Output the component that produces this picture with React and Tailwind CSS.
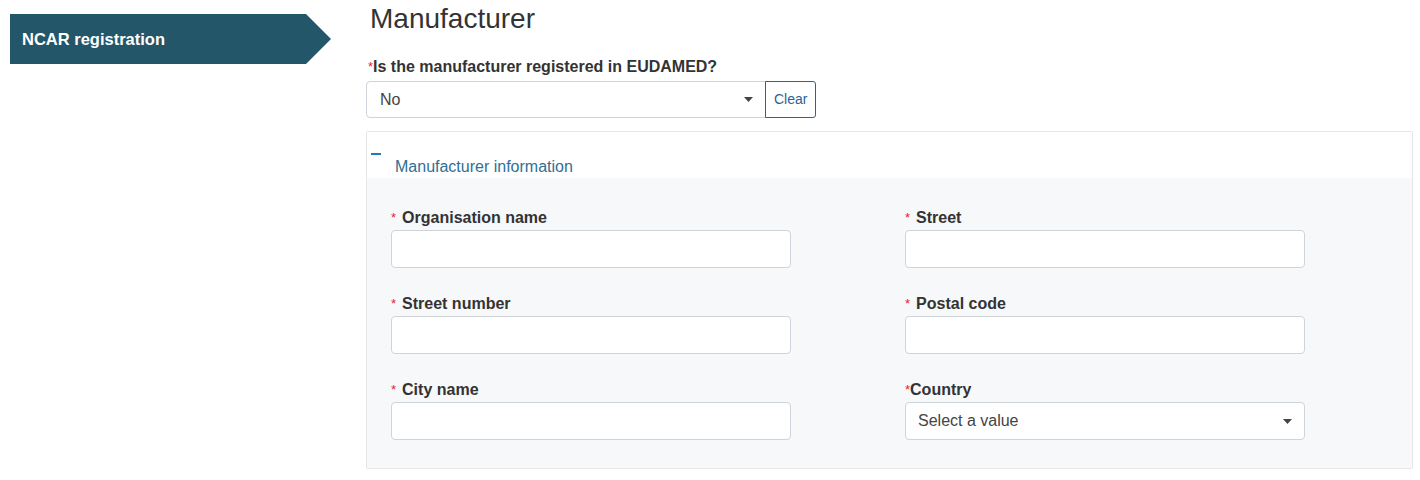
import React from 'react';

const font = { fontFamily: '"Liberation Sans", Arial, sans-serif' };

function Caret() {
  return (
    <svg width="9" height="5" viewBox="0 0 9 5" className="shrink-0">
      <path d="M0 0h9L4.5 5z" fill="#444" />
    </svg>
  );
}

function Field({ label, tight, select }) {
  return (
    <div className="flex flex-col">
      <label className="h-[22px] flex items-center text-[16px] font-bold text-[#333]">
        <span className={`text-[#e4222e] font-normal text-[13px] ${tight ? '' : 'mr-[6px]'}`}>*</span>
        {label}
      </label>
      {select ? (
        <div className="mt-[1px] w-[400px] h-[38px] bg-white border border-[#ced4da] rounded-[4px] flex items-center justify-between pl-[12px] pr-[12px] text-[16px] text-[#444]">
          <span>Select a value</span>
          <Caret />
        </div>
      ) : (
        <div className="mt-[1px] w-[400px] h-[38px] bg-white border border-[#ced4da] rounded-[4px]" />
      )}
    </div>
  );
}

export default function App() {
  return (
    <div className="w-[1420px] h-[480px] bg-white flex" style={font}>
      {/* Side nav */}
      <div className="w-[356px] shrink-0 pl-[10px] pt-[14px]">
        <div className="flex h-[50px]">
          <div className="w-[295px] bg-[#235668] flex items-center pl-[12px] text-white font-bold text-[16.5px]">
            NCAR registration
          </div>
          <svg width="26" height="50" viewBox="0 0 26 50" className="block">
            <path d="M0 0h1l25 25L1 50H0z" fill="#235668" />
          </svg>
        </div>
      </div>

      {/* Main */}
      <div className="flex-1 pl-[10px] pr-[7px]">
        <h1 className="text-[28px] text-[#333] leading-[34px] mt-[2px] pl-[4px]">Manufacturer</h1>

        <div className="mt-[21px] pl-[2px] text-[16px] font-bold text-[#333] leading-[20px]">
          <span className="text-[#e4222e] font-normal text-[13px] align-top">*</span>
          Is the manufacturer registered in EUDAMED?
        </div>
        <div className="flex mt-[4px]">
          <div className="w-[400px] h-[37px] border border-[#ced4da] rounded-l-[4px] flex items-center justify-between pl-[13px] pr-[12px] text-[16px] text-[#444]">
            <span>No</span>
            <Caret />
          </div>
          <div className="h-[37px] px-[8px] border border-[#2a6496] rounded-r-[3px] -ml-px flex items-center text-[14px] text-[#2a6496]">
            Clear
          </div>
        </div>

        <div className="mt-[13px] border border-[#e6e6e6] rounded-[2px]">
          <div className="h-[46px] bg-white relative">
            <div className="absolute left-[4px] top-[21px] w-[10px] h-[2px] bg-[#2779b0]" />
            <div className="pl-[28px] pt-[26px] text-[16px] text-[#2f6f94] leading-[18px]">Manufacturer information</div>
          </div>
          <div className="bg-[#f7f8fa] pl-[24px] pt-[29px] pb-[28px] grid grid-cols-[514px_400px] gap-y-[25px]">
            <Field label="Organisation name" />
            <Field label="Street" />
            <Field label="Street number" />
            <Field label="Postal code" />
            <Field label="City name" />
            <Field label="Country" tight select />
          </div>
        </div>
      </div>
    </div>
  );
}
